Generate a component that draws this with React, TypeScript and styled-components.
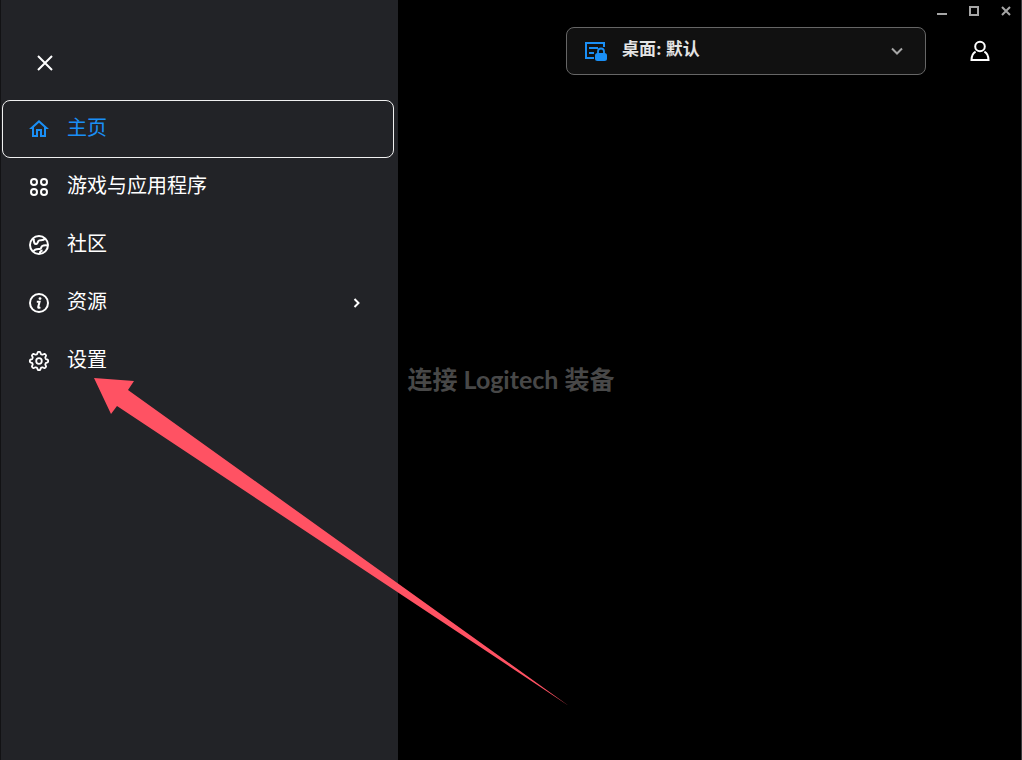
import React from "react";
import styled, { createGlobalStyle } from "styled-components";

const GlobalStyle = createGlobalStyle`
  *, *::before, *::after { box-sizing: border-box; }
  body {
    margin: 0;
    background: #000;
    color: #fff;
    font-family: Lato, "Noto Sans CJK SC", sans-serif;
  }
  button, select { font: inherit; color: inherit; }
`;

/* The drawer, the top area and the message share one grid cell, so the
   message stays centred in the window while the drawer lies over it. */
const Window = styled.div`
  display: grid;
  grid-template: minmax(100vh, auto) / 1fr;
  box-shadow: inset -1px 0 #3c3c3e;

  > * { grid-area: 1 / 1; }
`;

const TopArea = styled.header`
  align-self: start;
`;

const WindowControls = styled.div`
  display: flex;
  justify-content: flex-end;
`;

const WindowButton = styled.button`
  display: grid;
  place-items: center;
  width: 32px;
  height: 22px;
  padding: 0;
  border: 0;
  background: none;
  color: #a6a6a6;
`;

const Toolbar = styled.div`
  display: flex;
  align-items: center;
  justify-content: flex-end;
  gap: 36px;
  padding: 5px 24px 0 400px;
`;

const ProfilePicker = styled.label`
  display: grid;
  grid-template-columns: 56px 1fr 56px;
  align-items: center;
  flex: 0 1 360px;
  height: 48px;
  border: 1px solid #666;
  border-radius: 8px;
  background: #111;

  > * { grid-row: 1; }
  > svg { pointer-events: none; }
  > svg:first-of-type { grid-column: 1; margin-left: 17px; color: #1a8ff5; }
  > svg:last-of-type { grid-column: 3; justify-self: center; color: #a6a6a6; }
`;

const ProfileSelect = styled.select`
  grid-column: 1 / -1;
  width: 100%;
  height: 46px;
  padding: 0 56px 4px 55px;
  border: 0;
  border-radius: 8px;
  background: transparent;
  appearance: none;
  color: #e4e4e4;
  font-family: Inter, "Noto Sans CJK SC", sans-serif;
  font-size: 17px;
  font-weight: 700;

  option { background: #111; }
`;

const IconButton = styled.button`
  display: grid;
  place-items: center;
  width: 36px;
  height: 36px;
  padding: 0;
  border: 0;
  background: none;
`;

const Message = styled.h1`
  place-self: center;
  margin: 0;
  padding-bottom: 2px;
  color: #484848;
  font-size: 25px;
  line-height: 32px;
  font-weight: 700;
  white-space: nowrap;
`;

const Drawer = styled.aside`
  z-index: 1;
  width: 398px;
  border-left: 1px solid #121214;
  background: #222327;
`;

const DrawerHeader = styled.div`
  display: flex;
  align-items: flex-end;
  height: 100px;
  padding: 0 26px 19px;
`;

const MenuList = styled.ul`
  margin: 0;
  padding: 0 4px 0 1px;
  list-style: none;
`;

const MenuLink = styled.a<{ $active?: boolean }>`
  display: flex;
  align-items: center;
  gap: 16px;
  height: 58px;
  padding: 0 24px;
  border: 1px solid ${(p) => (p.$active ? "#f0f0f0" : "transparent")};
  border-radius: 8px;
  color: ${(p) => (p.$active ? "#1a8ff5" : "#fff")};
  text-decoration: none;
`;

const MenuLabel = styled.span`
  flex: 1;
  padding-bottom: 4px;
  font-size: 20px;
  line-height: 28px;
`;

const Pointer = styled.svg`
  position: absolute;
  left: 94px;
  top: 378px;
  z-index: 2;
  pointer-events: none;
`;

const Icon = ({ size = 24, children }: { size?: number; children: React.ReactNode }) => (
  <svg
    width={size}
    height={size}
    viewBox={`0 0 ${size} ${size}`}
    fill="none"
    stroke="currentColor"
    strokeWidth="2"
    aria-hidden="true"
  >
    {children}
  </svg>
);

const HomeIcon = () => (
  <Icon>
    <path
      fill="currentColor"
      stroke="none"
      d="M12 5.69l5 4.5V18h-2v-6H9v6H7v-7.81l5-4.5M12 3L2 12h3v8h6v-6h2v6h6v-8h3L12 3z"
    />
  </Icon>
);

const AppsIcon = () => (
  <Icon>
    <circle cx="7" cy="7" r="3" />
    <circle cx="17" cy="7" r="3" />
    <circle cx="7" cy="17" r="3" />
    <circle cx="17" cy="17" r="3" />
  </Icon>
);

const CommunityIcon = () => (
  <Icon>
    <circle cx="12" cy="12" r="9" />
    <path d="M6.800 6C6.600 9 7.400 11.300 9.300 11c2-.4 1-3 3-3.600 2-.5 4.200.4 5.700-2" />
    <path d="M21 12.400c-2.200-.4-4.400-.4-5.800.6-1.400 1-.6 2.800-2.400 3-2 .2-4.800-.6-6.400 2.400" />
    <path d="M12.800 20.600c0-1.800 1-2.800 2.800-3" />
  </Icon>
);

const InfoIcon = () => (
  <Icon>
    <circle cx="12" cy="12" r="9" />
    <circle cx="13" cy="7.600" r="1.400" fill="currentColor" stroke="none" />
    <path d="M9.800 10.800h2.800l-1.400 5.200q-.2 1 1 .8l1.200-.5" />
  </Icon>
);

/* Eight rounded teeth, traced round the centre with the first one at the top. */
const gearOutline = Array.from({ length: 96 }, (_, i) => {
  const angle = (i / 96) * Math.PI * 2;
  const radius = 8.1 + 1.1 * Math.tanh(2 * Math.cos(angle * 8));
  const x = 12 + radius * Math.sin(angle);
  const y = 12 - radius * Math.cos(angle);
  return `${x.toFixed(2)},${y.toFixed(2)}`;
}).join(" ");

const GearIcon = () => (
  <Icon>
    <polygon points={gearOutline} strokeWidth="1.800" strokeLinejoin="round" />
    <circle cx="12" cy="12" r="2.800" strokeWidth="1.800" />
  </Icon>
);

const ChevronRightIcon = () => (
  <Icon>
    <path d="M9.500 8l4 4-4 4" />
  </Icon>
);

const ChevronDownIcon = () => (
  <Icon>
    <path d="M7 9.500l5 5 5-5" />
  </Icon>
);

const CloseIcon = () => (
  <Icon>
    <path d="M5 5l14 14M19 5L5 19" />
  </Icon>
);

const UserIcon = () => (
  <Icon>
    <circle cx="12" cy="7.500" r="4.800" />
    <path d="M7.600 12.600C5 14 3.600 16.800 3.500 21h17c-.1-4.200-1.500-7-4.100-8.400" />
  </Icon>
);

const LockedProfileIcon = () => (
  <Icon>
    <path d="M10 19H2V4h18v4" />
    <path d="M5 9h9M5 14h5" />
    <path d="M14 15v-2.500a3 3 0 0 1 6 0V15" strokeWidth="1.800" />
    <rect x="11" y="14" width="12" height="8" rx="2.500" fill="currentColor" stroke="none" />
  </Icon>
);

const menu = [
  { label: "主页", icon: <HomeIcon />, active: true },
  { label: "游戏与应用程序", icon: <AppsIcon /> },
  { label: "社区", icon: <CommunityIcon /> },
  { label: "资源", icon: <InfoIcon />, expands: true },
  { label: "设置", icon: <GearIcon /> },
];

export default function App() {
  return (
    <>
      <GlobalStyle />
      <Window>
        <TopArea>
          <WindowControls>
            <WindowButton aria-label="最小化">
              <Icon size={12}><path d="M1 9h10" /></Icon>
            </WindowButton>
            <WindowButton aria-label="最大化">
              <Icon size={12}><path d="M2 2h8v8H2z" /></Icon>
            </WindowButton>
            <WindowButton aria-label="关闭窗口">
              <Icon size={12}><path d="M2 2l8 8M10 2l-8 8" /></Icon>
            </WindowButton>
          </WindowControls>
          <Toolbar>
            <ProfilePicker>
              <LockedProfileIcon />
              <ProfileSelect aria-label="配置文件" defaultValue="default">
                <option value="default">桌面: 默认</option>
              </ProfileSelect>
              <ChevronDownIcon />
            </ProfilePicker>
            <IconButton aria-label="帐户">
              <UserIcon />
            </IconButton>
          </Toolbar>
        </TopArea>

        <Message>连接 Logitech 装备</Message>

        <Drawer>
          <DrawerHeader>
            <IconButton aria-label="关闭菜单">
              <CloseIcon />
            </IconButton>
          </DrawerHeader>
          <nav>
            <MenuList>
              {menu.map((item) => (
                <li key={item.label}>
                  <MenuLink
                    href="#"
                    $active={item.active}
                    aria-current={item.active ? "page" : undefined}
                  >
                    {item.icon}
                    <MenuLabel>{item.label}</MenuLabel>
                    {item.expands && <ChevronRightIcon />}
                  </MenuLink>
                </li>
              ))}
            </MenuList>
          </nav>
        </Drawer>

        <Pointer width="476" height="329" viewBox="0 0 476 329" aria-hidden="true">
          <polygon fill="#ff5263" points="0,0 40,3 34,12 475,328 23,28 17,36" />
        </Pointer>
      </Window>
    </>
  );
}
